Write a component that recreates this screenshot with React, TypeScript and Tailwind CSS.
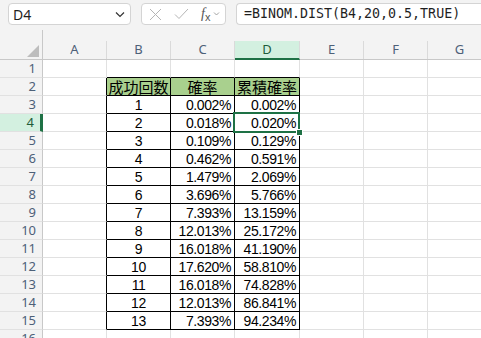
import React from "react";

const cols = [
  ["A", "w-[64px]"],
  ["B", "w-[64px]"],
  ["C", "w-[64px]"],
  ["D", "w-[65px]"],
  ["E", "w-[64px]"],
  ["F", "w-[64px]"],
  ["G", "w-[64px]"],
];

const rows: [string, string, string][] = [
  ["1", "0.002%", "0.002%"],
  ["2", "0.018%", "0.020%"],
  ["3", "0.109%", "0.129%"],
  ["4", "0.462%", "0.591%"],
  ["5", "1.479%", "2.069%"],
  ["6", "3.696%", "5.766%"],
  ["7", "7.393%", "13.159%"],
  ["8", "12.013%", "25.172%"],
  ["9", "16.018%", "41.190%"],
  ["10", "17.620%", "58.810%"],
  ["11", "16.018%", "74.828%"],
  ["12", "12.013%", "86.841%"],
  ["13", "7.393%", "94.234%"],
];

const headFont = { fontFamily: "'Noto Sans', Inter, sans-serif" };
const cellFont = { fontFamily: "'Liberation Sans', 'Noto Sans CJK JP', sans-serif" };

function Cell({ r, c }: { r: number; c: number }) {
  const inTable = r >= 2 && r <= 15 && c >= 1 && c <= 3;
  const rightBlack = r >= 2 && r <= 15 && c >= 0 && c <= 3;
  const bottomBlack = r >= 1 && r <= 15 && c >= 1 && c <= 3;
  let content: React.ReactNode = null;
  let align = "justify-end pr-[3px]";
  if (r === 2 && inTable) {
    content = ["成功回数", "確率", "累積確率"][c - 1];
    align = "justify-center";
  } else if (r >= 3 && inTable) {
    const d = rows[r - 3];
    content = d[c - 1];
    if (c === 1) align = "justify-center";
  }
  return (
    <div
      className={`relative flex items-center h-[18px] shrink-0 border-r border-b ${cols[c][1]} ${
        rightBlack ? "border-r-black" : "border-r-[#e1e1e1]"
      } ${bottomBlack ? "border-b-black" : "border-b-[#e1e1e1]"} ${
        r === 2 && inTable ? "bg-[#a9d08e]" : "bg-white"
      } ${align}`}
    >
      {content !== null && (
        <span
          className={`text-black whitespace-nowrap ${
            r === 2 ? "text-[15px] leading-[17px]" : "text-[14px] leading-[17px] tracking-[-0.4px] pt-[1px]"
          }`}
          style={r === 2 ? { fontFamily: "'Noto Sans CJK JP', sans-serif" } : cellFont}
        >
          {content}
        </span>
      )}
      {r === 4 && c === 3 && (
        <div className="absolute z-10 -left-[2px] -top-[2px] w-[67px] h-[21px] border-2 border-[#1e7145]">
          <div className="absolute -right-[5px] -bottom-[5px] w-[7px] h-[7px] bg-[#1e7145] border border-white" />
        </div>
      )}
    </div>
  );
}

export default function App() {
  return (
    <div className="w-[481px] h-[338px] overflow-hidden bg-white">
      {/* Formula bar */}
      <div className="h-[30px] bg-[#f3f3f3] flex items-start pt-[3px] pl-[8px] gap-[10px]">
        <div className="w-[123px] h-[22px] shrink-0 bg-white border border-[#d4d4d4] rounded-[4px] flex items-center justify-between pl-[4px] pr-[4px]">
          <span className="text-[14px] text-[#1f1f1f]" style={headFont}>
            D4
          </span>
          <svg width="12" height="12" viewBox="0 0 12 12">
            <path d="M2 4.5 L6 8.5 L10 4.5" fill="none" stroke="#333" strokeWidth="1.2" />
          </svg>
        </div>
        <div className="w-[85px] h-[22px] shrink-0 bg-white border border-[#d4d4d4] rounded-[4px] flex items-center pl-[7px] gap-[12px]">
          <svg width="13" height="13" viewBox="0 0 13 13">
            <path d="M1 1 L12 12 M12 1 L1 12" stroke="#b5b5b5" strokeWidth="1" />
          </svg>
          <svg width="15" height="12" viewBox="0 0 15 12">
            <path d="M1 6.5 L5 10.5 L14 1" fill="none" stroke="#b5b5b5" strokeWidth="1" />
          </svg>
          <div className="flex items-center gap-[3px]">
            <span className="text-[14px] italic text-[#555] leading-none" style={{ fontFamily: "'Liberation Serif', serif" }}>
              f<span className="text-[11px] not-italic relative top-[3px]" style={{ fontFamily: "'Liberation Sans', sans-serif" }}>x</span>
            </span>
            <svg width="7" height="6" viewBox="0 0 7 6">
              <path d="M1 1.5 L3.5 4 L6 1.5" fill="none" stroke="#999" strokeWidth="0.9" />
            </svg>
          </div>
        </div>
        <div className="flex-1 h-[22px] bg-white border border-[#d4d4d4] border-r-0 rounded-l-[4px] flex items-center pl-[7px]">
          <span className="text-[13.3px] text-[#1f1f1f] whitespace-nowrap" style={{ fontFamily: "'DejaVu Sans Mono', monospace" }}>
            =BINOM.DIST(B4,20,0.5,TRUE)
          </span>
        </div>
      </div>

      {/* Column headers */}
      <div className="flex h-[30px] bg-[#f3f3f3] border-b border-[#c8c8c8]">
        <div className="relative w-[43px] shrink-0 border-r border-[#c8c8c8]">
          <svg className="absolute right-[3px] bottom-[2px]" width="12" height="12" viewBox="0 0 12 12">
            <path d="M12 0 L12 12 L0 12 Z" fill="#bdbdbd" />
          </svg>
        </div>
        {cols.map(([l, w]) => (
          <div
            key={l}
            className={`${w} shrink-0 self-end h-[18px] flex items-center justify-center border-r border-[#dadada] text-[13px] ${
              l === "D" ? "bg-[#d3f0e0] text-[#1e5c3a] border-b-2 border-b-[#1e7145] -mb-[1px] h-[19px]" : "text-[#4d6078]"
            }`}
            style={headFont}
          >
            {l}
          </div>
        ))}
      </div>

      {/* Rows */}
      {Array.from({ length: 16 }, (_, i) => i + 1).map((r) => (
        <div key={r} className="flex">
          <div
            className={`w-[43px] h-[18px] shrink-0 flex items-center justify-end pr-[6px] border-b border-b-[#e1e1e1] text-[13px] ${
              r === 4
                ? "bg-[#d3f0e0] text-[#1e5c3a] border-r-[3px] border-r-[#1e7145] pr-[4px]"
                : "bg-[#f3f3f3] text-[#4d6078] border-r border-r-[#c8c8c8]"
            }`}
            style={headFont}
          >
            {r}
          </div>
          {cols.map((_, c) => (
            <Cell key={c} r={r} c={c} />
          ))}
        </div>
      ))}
    </div>
  );
}
